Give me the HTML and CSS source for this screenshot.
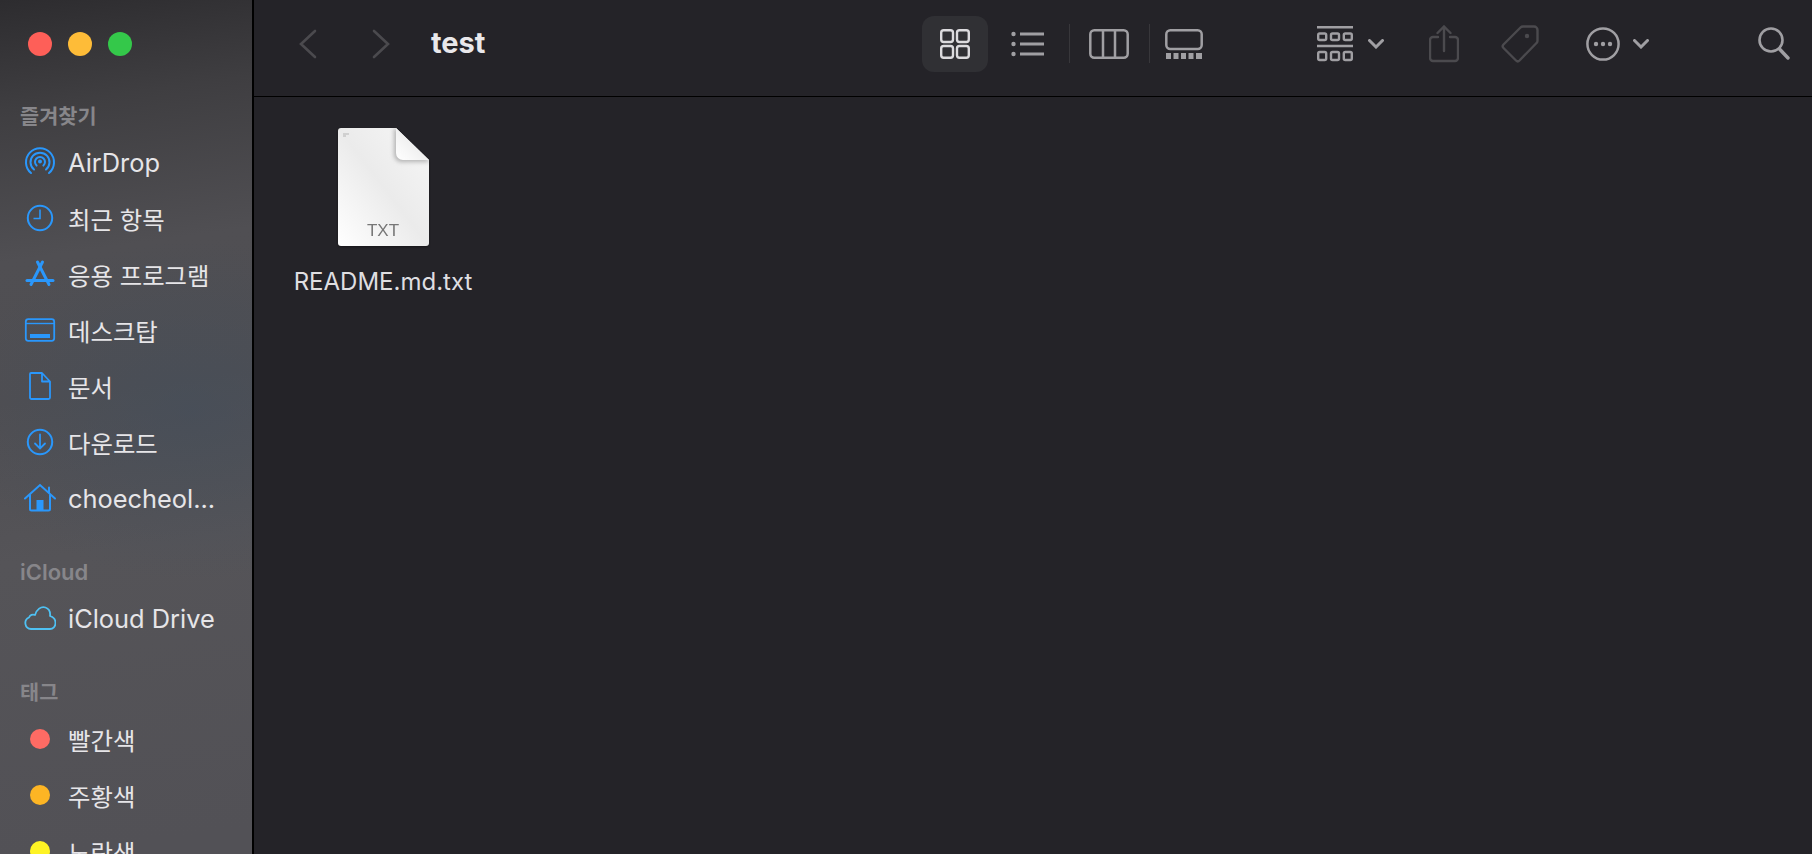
FILE: index.html
```html
<!DOCTYPE html>
<html lang="ko">
<head>
    <meta charset="UTF-8">
    <title>test</title>
    <link rel="stylesheet" href="styles.css">
</head>
<body>
    <div class="window">
        <!-- Sidebar -->
        <aside class="sidebar">
            <div class="lights">
                <span class="light red"></span>
                <span class="light yellow"></span>
                <span class="light green"></span>
            </div>

            <div class="section-label first ko">즐겨찾기</div>
            <div class="row">
                <svg class="row-icon" viewBox="0 0 32 32"><g fill="none" stroke="#2a97fb" stroke-width="2" stroke-linecap="round"><path d="M7 27A14 14 0 1 1 25 27"/><path d="M10 23.5A9.5 9.5 0 1 1 22 23.5"/><path d="M12.6 19.6A5 5 0 1 1 19.4 19.6"/></g><circle cx="16" cy="15.5" r="2" fill="#2a97fb"/></svg>
                <span>AirDrop</span>
            </div>
            <div class="row ko">
                <svg class="row-icon" viewBox="0 0 32 32"><circle cx="16" cy="16" r="12.2" fill="none" stroke="#2a97fb" stroke-width="2"/><path d="M16 7.5V16.5H9.5" fill="none" stroke="#2a97fb" stroke-width="1.6"/></svg>
                <span>최근 항목</span>
            </div>
            <div class="row ko">
                <svg class="row-icon" viewBox="0 0 32 32"><g fill="none" stroke="#2a97fb" stroke-width="3" stroke-linecap="round"><path d="M13.500 4L25 26.500"/><path d="M18.500 4L7 26.500"/><path d="M3 22.500H29"/></g></svg>
                <span>응용 프로그램</span>
            </div>
            <div class="row ko">
                <svg class="row-icon" viewBox="0 0 32 32"><rect x="1.8" y="5.2" width="28.4" height="21.6" rx="2.5" fill="none" stroke="#2a97fb" stroke-width="1.8"/><path d="M2 9.5H30" stroke="#2a97fb" stroke-width="1.4"/><rect x="6" y="20" width="20" height="4" fill="#2a97fb"/></svg>
                <span>데스크탑</span>
            </div>
            <div class="row ko">
                <svg class="row-icon" viewBox="0 0 32 32"><path d="M7 3H18L26 11.5V27.5A1.5 1.5 0 0 1 24.500 29H7.500A1.500 1.500 0 0 1 6 27.500V4A1 1 0 0 1 7 3ZM18 3V11.500H26" fill="none" stroke="#2a97fb" stroke-width="1.800" stroke-linejoin="round"/></svg>
                <span>문서</span>
            </div>
            <div class="row ko">
                <svg class="row-icon" viewBox="0 0 32 32"><circle cx="16" cy="16" r="12.2" fill="none" stroke="#2a97fb" stroke-width="2"/><path d="M16 8.500V22M11 17.500L16 22.500L21 17.500" fill="none" stroke="#2a97fb" stroke-width="1.800" stroke-linecap="round"/></svg>
                <span>다운로드</span>
            </div>
            <div class="row">
                <svg class="row-icon" viewBox="0 0 32 32"><path d="M1 16.500L16 3L31 16.500M6 13V27A1.500 1.500 0 0 0 7.500 28.500H24.500A1.500 1.500 0 0 0 26 27V13M25 5.500V11" fill="none" stroke="#2a97fb" stroke-width="2" stroke-linecap="round"/><rect x="12.500" y="18" width="7" height="10.500" fill="#2a97fb"/></svg>
                <span>choecheol...</span>
            </div>

            <div class="section-label icloud">iCloud</div>
            <div class="row">
                <svg class="row-icon" viewBox="0 0 32 32"><path d="M7 27A6 6 0 0 1 5 15.500C6 13 8.500 12 11 13C12.500 7.500 17 4 21.500 5.500C25 6.700 26.500 10 26 14C29.500 15 31.500 18 31.500 21C31.500 24.500 29 27 26 27Z" fill="none" stroke="#4fc1f3" stroke-width="1.800" stroke-linejoin="round"/></svg>
                <span>iCloud Drive</span>
            </div>

            <div class="section-label tags ko">태그</div>
            <div class="row ko">
                <span class="row-icon tag-slot"><span class="tag-dot dot-red"></span></span>
                <span>빨간색</span>
            </div>
            <div class="row ko">
                <span class="row-icon tag-slot"><span class="tag-dot dot-orange"></span></span>
                <span>주황색</span>
            </div>
            <div class="row ko">
                <span class="row-icon tag-slot"><span class="tag-dot dot-yellow"></span></span>
                <span>노란색</span>
            </div>
        </aside>

        <!-- Main -->
        <main class="main">
            <div class="toolbar">
                <svg class="tb back" width="24" height="32" viewBox="0 0 24 32"><path d="M19 3L5 16L19 29" fill="none" stroke="#4b4a4e" stroke-width="2.600" stroke-linecap="round"/></svg>
                <svg class="tb forward" width="24" height="32" viewBox="0 0 24 32"><path d="M5 3L19 16L5 29" fill="none" stroke="#4b4a4e" stroke-width="2.600" stroke-linecap="round"/></svg>
                <h1 class="title">test</h1>

                <div class="view-active">
                    <svg width="30" height="30" viewBox="0 0 30 30"><g fill="none" stroke="#dcdbde" stroke-width="2.400"><rect x="1.200" y="1.200" width="11.800" height="11.800" rx="2.500"/><rect x="17" y="1.200" width="11.800" height="11.800" rx="2.500"/><rect x="1.200" y="17" width="11.800" height="11.800" rx="2.500"/><rect x="17" y="17" width="11.800" height="11.800" rx="2.500"/></g></svg>
                </div>
                <svg class="tb list" width="34" height="26" viewBox="0 0 34 26"><g fill="#a09fa3"><circle cx="2.500" cy="3" r="2.200"/><circle cx="2.500" cy="13" r="2.200"/><circle cx="2.500" cy="23" r="2.200"/></g><path d="M9 3H33M9 13H33M9 23H33" stroke="#a09fa3" stroke-width="2.800"/></svg>
                <span class="divider div-a"></span>
                <svg class="tb columns" width="40" height="30" viewBox="0 0 40 30"><g fill="none" stroke="#a09fa3" stroke-width="2.500"><rect x="1.300" y="1.300" width="37.400" height="27.400" rx="4"/><path d="M14 1V29M26 1V29"/></g></svg>
                <span class="divider div-b"></span>
                <svg class="tb gallery" width="38" height="30" viewBox="0 0 38 30"><rect x="1.300" y="1.300" width="35.400" height="18.700" rx="4" fill="none" stroke="#a09fa3" stroke-width="2.500"/><g fill="#a09fa3"><rect x="1" y="24" width="5" height="6"/><rect x="8.500" y="24" width="5" height="6"/><rect x="16" y="24" width="5" height="6"/><rect x="23.500" y="24" width="5" height="6"/><rect x="31" y="24" width="6" height="6"/></g></svg>

                <svg class="tb group" width="36" height="36" viewBox="0 0 36 36"><path d="M0 1.200H36M0 20H36" stroke="#a09fa3" stroke-width="2.400"/><g fill="none" stroke="#a09fa3" stroke-width="2.400"><rect x="1.200" y="7.500" width="8" height="6.500" rx="1.500"/><rect x="14" y="7.500" width="8" height="6.500" rx="1.500"/><rect x="26.800" y="7.500" width="8" height="6.500" rx="1.500"/><rect x="1.200" y="26" width="8" height="8" rx="1.500"/><rect x="14" y="26" width="8" height="8" rx="1.500"/><rect x="26.800" y="26" width="8" height="8" rx="1.500"/></g></svg>
                <svg class="tb chev-a" width="16" height="10" viewBox="0 0 16 10"><path d="M1.500 1.500L8 8L14.500 1.500" fill="none" stroke="#a09fa3" stroke-width="3" stroke-linecap="round"/></svg>
                <svg class="tb share" width="30" height="38" viewBox="0 0 30 38"><path d="M9 12H4A3 3 0 0 0 1 15V33A3 3 0 0 0 4 36H26A3 3 0 0 0 29 33V15A3 3 0 0 0 26 12H21M15 26V2M8.500 8L15 1.500L21.500 8" fill="none" stroke="#4b4a4e" stroke-width="2.400" stroke-linecap="round"/></svg>
                <svg class="tb tag" width="38" height="38" viewBox="0 0 38 38"><path d="M22 1.500H33A3.500 3.500 0 0 1 36.500 5V15.500A3 3 0 0 1 35.500 18L18.500 35.500A2.500 2.500 0 0 1 15 35.500L2.500 23A2.500 2.500 0 0 1 2.500 19.500L19.500 2.500A3.500 3.500 0 0 1 22 1.500Z" fill="none" stroke="#4b4a4e" stroke-width="2.400"/><circle cx="26" cy="11" r="2.200" fill="#4b4a4e"/></svg>
                <svg class="tb more" width="34" height="34" viewBox="0 0 34 34"><circle cx="17" cy="17" r="15.600" fill="none" stroke="#a09fa3" stroke-width="2.500"/><g fill="#a09fa3"><circle cx="10" cy="17" r="2.200"/><circle cx="17" cy="17" r="2.200"/><circle cx="24" cy="17" r="2.200"/></g></svg>
                <svg class="tb chev-b" width="16" height="10" viewBox="0 0 16 10"><path d="M1.500 1.500L8 8L14.500 1.500" fill="none" stroke="#a09fa3" stroke-width="3" stroke-linecap="round"/></svg>
                <svg class="tb search" width="32" height="33" viewBox="0 0 32 33"><circle cx="13" cy="13" r="11.500" fill="none" stroke="#a09fa3" stroke-width="2.600"/><path d="M21.500 22L30 31" stroke="#a09fa3" stroke-width="3.400" stroke-linecap="round"/></svg>
            </div>

            <div class="files">
                <div class="file">
                    <div class="file-icon">
                        <svg width="91" height="118" viewBox="0 0 91 118">
                            <defs>
                                <linearGradient id="paper" x1="0" y1="1" x2="1" y2="0">
                                    <stop offset="0" stop-color="#ffffff"/>
                                    <stop offset="0.5" stop-color="#ebebeb"/>
                                    <stop offset="1" stop-color="#f7f7f7"/>
                                </linearGradient>
                                <linearGradient id="fold" x1="0" y1="1" x2="1" y2="0">
                                    <stop offset="0" stop-color="#ffffff"/>
                                    <stop offset="1" stop-color="#e2e2e2"/>
                                </linearGradient>
                                <filter id="soft" x="-30%" y="-30%" width="160%" height="160%">
                                    <feGaussianBlur stdDeviation="2"/>
                                </filter>
                                <clipPath id="sheet">
                                    <path d="M3 0H58L91 32V115A3 3 0 0 1 88 118H3A3 3 0 0 1 0 115V3A3 3 0 0 1 3 0Z"/>
                                </clipPath>
                            </defs>
                            <path d="M3 0H58L91 32V115A3 3 0 0 1 88 118H3A3 3 0 0 1 0 115V3A3 3 0 0 1 3 0Z" fill="url(#paper)"/>
                            <g clip-path="url(#sheet)">
                                <path d="M58 0L91 32V34H65A8 8 0 0 1 56 25V0Z" fill="#b4b4b4" filter="url(#soft)"/>
                            </g>
                            <path d="M58 0L91 32H65A7 7 0 0 1 58 25Z" fill="url(#fold)"/>
                            <path d="M5 6H11M5 8H8" stroke="#b5b5b5" stroke-width="1"/>
                        </svg>
                        <span class="file-ext">TXT</span>
                    </div>
                    <div class="file-name">README.md.txt</div>
                </div>
            </div>
        </main>
    </div>
</body>
</html>
```

FILE: styles.css
```css
html, body {
    margin: 0;
    padding: 0;
    height: 100%;
    overflow: hidden;
}
body {
    font-family: Inter, "Noto Sans CJK KR", sans-serif;
    background-color: #242328;
    color: #e6e5e8;
}
.window {
    display: flex;
    width: 1812px;
    height: 854px;
    overflow: hidden;
}

/* Sidebar */
.sidebar {
    width: 252px;
    flex: none;
    overflow: hidden;
    border-right: 2px solid #000;
    background:
        radial-gradient(ellipse 230px 170px at 190px 410px, rgba(66, 78, 92, 0.55), rgba(66, 78, 92, 0)),
        linear-gradient(172deg, #2d2c2f 0, #3f3e41 110px, #504f53 260px, #4f4e52 400px, #555458 560px, #525156 854px);
}
.lights {
    display: flex;
    gap: 16px;
    padding: 32px 0 0 28px;
}
.light {
    width: 24px;
    height: 24px;
    border-radius: 50%;
}
.red { background-color: #fe5f58; }
.yellow { background-color: #febc38; }
.green { background-color: #34c84a; }
.section-label {
    margin: 0 0 3px 20px;
    height: 28px;
    line-height: 28px;
    font-size: 22px;
    font-weight: 600;
    color: #87868a;
}
.section-label.ko { font-size: 20.8px; }
.section-label.first { margin-top: 47px; }
.section-label.icloud { margin: 32px 0 4px 20px; }
.section-label.tags { margin: 33px 0 4px 20px; }
.row {
    display: flex;
    align-items: center;
    height: 56px;
    font-size: 25.4px;
    white-space: nowrap;
}
.row.ko { font-size: 24.4px; }
.row-icon {
    width: 32px;
    height: 32px;
    margin: 0 12px 0 24px;
    flex: none;
}
.tag-slot {
    display: flex;
    align-items: center;
    justify-content: center;
}
.tag-dot {
    width: 20px;
    height: 20px;
    border-radius: 50%;
}
.dot-red { background-color: #fe6b64; }
.dot-orange { background-color: #fdb524; }
.dot-yellow { background-color: #fef324; }

/* Toolbar */
.main {
    flex: 1;
    min-width: 0;
}
.toolbar {
    display: flex;
    align-items: center;
    height: 87px;
    border-bottom: 1px solid #000;
    padding: 0 0 9px 42px;
}
.tb { flex: none; }
.forward { margin-left: 49px; }
.title {
    margin: 0 0 2px 38px;
    width: 54px;
    font-size: 29px;
    font-weight: 700;
    color: #e9e8eb;
}
.view-active {
    display: flex;
    align-items: center;
    justify-content: center;
    width: 66px;
    height: 56px;
    margin-left: 437px;
    border-radius: 12px;
    background-color: #303034;
}
.list { margin-left: 23px; }
.divider {
    width: 1px;
    height: 39px;
    background-color: #38373b;
}
.div-a { margin-left: 24px; }
.columns { margin-left: 19px; }
.div-b { margin-left: 20px; }
.gallery { margin-left: 15px; }
.group { margin-left: 114px; }
.chev-a { margin-left: 15px; }
.share { margin-left: 45px; }
.tag { margin-left: 42px; }
.more { margin-left: 47px; }
.chev-b { margin-left: 13px; }
.search { margin-left: 109px; }

/* Files */
.files {
    padding: 31px 0 0 37px;
}
.file {
    display: flex;
    flex-direction: column;
    align-items: center;
    width: 184px;
}
.file-icon {
    position: relative;
    width: 91px;
    height: 118px;
    filter: drop-shadow(0 1px 1px rgba(0, 0, 0, 0.4));
}
.file-icon svg { display: block; }
.file-ext {
    position: absolute;
    left: 0;
    right: 0;
    bottom: 5px;
    text-align: center;
    font-family: "Liberation Sans", Arial, sans-serif;
    font-size: 17px;
    line-height: 20px;
    color: #777;
}
.file-name {
    margin-top: 22px;
    font-size: 24px;
    line-height: 28px;
    color: #dfdee1;
    white-space: nowrap;
}
```
